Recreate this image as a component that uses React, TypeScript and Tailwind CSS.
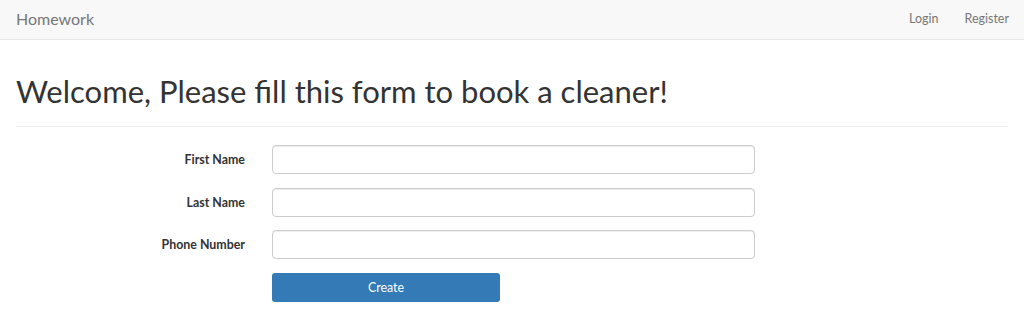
import React from "react";

export default function App() {
  const fields = ["First Name", "Last Name", "Phone Number"];
  return (
    <div className="min-h-[332px] bg-white text-[#333]" style={{ fontFamily: "Lato, 'Noto Sans', sans-serif" }}>
      <nav className="flex h-[40px] items-center justify-between border-b border-[#e7e7e7] bg-[#f8f8f8] pl-[16px] pr-[15px]">
        <span className="-mt-[2px] text-[16px] text-[#777]">Homework</span>
        <div className="flex gap-[26px] text-[12.5px] text-[#777]">
          <span>Login</span>
          <span>Register</span>
        </div>
      </nav>
      <div className="px-[16px]">
        <h1 className="mt-[34px] mb-0 text-[31px] leading-[34px] font-normal text-[#333]">
          Welcome, Please fill this form to book a cleaner!
        </h1>
        <div className="mt-[18px] border-t border-[#eee]" />
        <form className="mt-[18px] flex flex-col gap-[13.6px]">
          {fields.map((f) => (
            <div key={f} className="flex items-center gap-[27px]">
              <label className="w-[229px] pt-[2px] text-right text-[12.4px] font-bold text-[#333]">{f}</label>
              <input className="h-[29px] w-[483px] rounded-[4px] border border-[#ccc] bg-white px-3 text-[12px] shadow-[inset_0_1px_1px_rgba(0,0,0,0.075)] outline-none" />
            </div>
          ))}
          <div className="flex gap-[27px]">
            <div className="w-[229px]" />
            <button type="button" className="h-[29px] w-[228px] rounded-[3px] bg-[#337ab7] pt-[2px] text-[12.4px] text-white">
              Create
            </button>
          </div>
        </form>
      </div>
    </div>
  );
}
